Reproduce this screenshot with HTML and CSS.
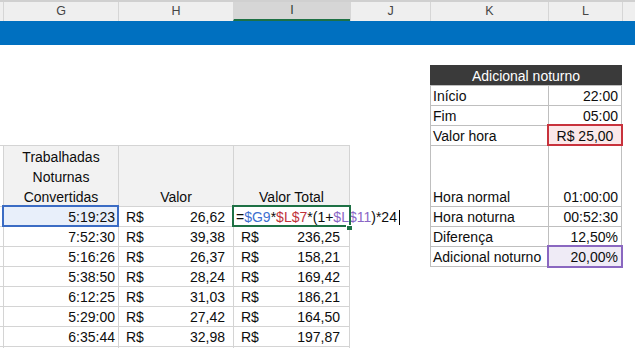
FILE: index.html
```html
<!DOCTYPE html>
<html lang="pt-BR">
<head>
    <meta charset="UTF-8">
    <meta name="viewport" content="width=device-width, initial-scale=1.0">
    <title>Adicional noturno</title>
    <link rel="stylesheet" href="styles.css">
</head>
<body>
<div class="colheads">
    <div class="ch f"></div>
    <div class="ch g">G</div>
    <div class="ch h">H</div>
    <div class="ch i active">I</div>
    <div class="ch j">J</div>
    <div class="ch k">K</div>
    <div class="ch l">L</div>
    <div class="ch m"></div>
</div>
<div class="banner"></div>

<div class="sheet">
    <!-- tabela de horas -->
    <div class="hours">
        <div class="row tall">
            <div class="cell f"></div>
            <div class="cell g head"><span>Trabalhadas</span><span>Noturnas</span><span>Convertidas</span></div>
            <div class="cell h head"><span>Valor</span></div>
            <div class="cell i head"><span>Valor Total</span></div>
        </div>
        <div class="row">
            <div class="cell f"></div>
            <div class="cell g num ref-blue">5:19:23</div>
            <div class="cell h money"><span>R$</span><span>26,62</span></div>
            <div class="cell i editing"><span>=<span class="c-blue">$G9</span>*<span class="c-red">$L$7</span>*(1+<span class="c-purple">$L$11</span>)*24</span><span class="caret"></span></div>
        </div>
        <div class="row">
            <div class="cell f"></div>
            <div class="cell g num">7:52:30</div>
            <div class="cell h money"><span>R$</span><span>39,38</span></div>
            <div class="cell i money"><span>R$</span><span>236,25</span></div>
        </div>
        <div class="row">
            <div class="cell f"></div>
            <div class="cell g num">5:16:26</div>
            <div class="cell h money"><span>R$</span><span>26,37</span></div>
            <div class="cell i money"><span>R$</span><span>158,21</span></div>
        </div>
        <div class="row">
            <div class="cell f"></div>
            <div class="cell g num">5:38:50</div>
            <div class="cell h money"><span>R$</span><span>28,24</span></div>
            <div class="cell i money"><span>R$</span><span>169,42</span></div>
        </div>
        <div class="row">
            <div class="cell f"></div>
            <div class="cell g num">6:12:25</div>
            <div class="cell h money"><span>R$</span><span>31,03</span></div>
            <div class="cell i money"><span>R$</span><span>186,21</span></div>
        </div>
        <div class="row">
            <div class="cell f"></div>
            <div class="cell g num">5:29:00</div>
            <div class="cell h money"><span>R$</span><span>27,42</span></div>
            <div class="cell i money"><span>R$</span><span>164,50</span></div>
        </div>
        <div class="row">
            <div class="cell f"></div>
            <div class="cell g num">6:35:44</div>
            <div class="cell h money"><span>R$</span><span>32,98</span></div>
            <div class="cell i money"><span>R$</span><span>197,87</span></div>
        </div>
        <div class="row stub">
            <div class="cell f"></div>
            <div class="cell g"></div>
            <div class="cell h"></div>
            <div class="cell i"></div>
        </div>
    </div>

    <div class="gap"></div>

    <!-- parametros -->
    <div class="params">
        <div class="title">Adicional noturno</div>
        <div class="row">
            <div class="cell k">Início</div>
            <div class="cell l num">22:00</div>
        </div>
        <div class="row">
            <div class="cell k">Fim</div>
            <div class="cell l num">05:00</div>
        </div>
        <div class="row">
            <div class="cell k">Valor hora</div>
            <div class="cell l center ref-red">R$ 25,00</div>
        </div>
        <div class="row tall">
            <div class="cell k">Hora normal</div>
            <div class="cell l num">01:00:00</div>
        </div>
        <div class="row">
            <div class="cell k">Hora noturna</div>
            <div class="cell l num">00:52:30</div>
        </div>
        <div class="row">
            <div class="cell k">Diferença</div>
            <div class="cell l num">12,50%</div>
        </div>
        <div class="row last">
            <div class="cell k">Adicional noturno</div>
            <div class="cell l num ref-purple">20,00%</div>
        </div>
    </div>
</div>
</body>
</html>
```

FILE: styles.css
```css
body {
    margin: 0;
    font-family: "Liberation Sans", Arial, sans-serif;
    font-size: 14px;
    color: #0d0d0d;
    background-color: #fff;
    height: 348px;
    overflow: hidden;
}

/* column widths shared by headers and cells */
.f { width: 3px; }
.g { width: 115px; }
.h { width: 115px; }
.i { width: 117px; }
.j { width: 80px; }
.k { width: 118px; }
.l { width: 74px; }
.m { width: 13px; }

.colheads {
    display: flex;
    height: 21px;
    box-sizing: border-box;
    border-top: 2px solid #d0d0d0;
    background-color: #efefef;
}

.ch {
    flex: none;
    box-sizing: border-box;
    border-left: 1px solid #d6d6d6;
    text-align: center;
    font-size: 12.5px;
    line-height: 19px;
    color: #454545;
}

.ch.f {
    border-left: none;
}

.ch.active {
    background-color: #d6d6d6;
    border-bottom: 2px solid #1e7145;
    line-height: 17px;
    color: #2f3a33;
}

.banner {
    height: 24px;
    background-color: #0070c0;
}

.sheet {
    display: flex;
    align-items: flex-start;
}

.gap {
    width: 80px;
    flex: none;
}

.row {
    display: flex;
    height: 20px;
}

.row.tall {
    height: 61px;
}

.row.stub {
    height: 2px;
}

.cell {
    flex: none;
    box-sizing: border-box;
    display: flex;
    align-items: flex-end;
    line-height: 16px;
    padding-bottom: 1px;
    white-space: nowrap;
}

/* hours table */
.hours {
    margin-top: 100px;
    flex: none;
}

.hours .cell {
    border-top: 1px solid #d4d4d4;
    border-left: 1px solid #d4d4d4;
}

.hours .cell.f {
    border-left: none;
}

.hours .cell.i {
    border-right: 1px solid #d4d4d4;
}

.head {
    background-color: #f2f2f2;
    flex-direction: column;
    justify-content: flex-end;
    align-items: center;
    gap: 4px;
}

.num {
    justify-content: flex-end;
    padding-right: 3px;
}

.center {
    justify-content: center;
}

.money {
    justify-content: space-between;
    padding-left: 7px;
    padding-right: 8px;
}

.money.i {
    padding-right: 9px;
}

.editing {
    position: relative;
    padding-left: 2px;
    overflow: visible;
    outline: 2px solid #1e7145;
    outline-offset: -1px;
    background-color: #fff;
}

.editing::after {
    content: "";
    position: absolute;
    right: -3px;
    bottom: -4px;
    width: 5px;
    height: 4px;
    background-color: #1e7145;
    border-left: 1px solid #fff;
    border-top: 1px solid #fff;
}

.caret {
    flex: none;
    width: 1px;
    height: 15px;
    margin-left: 2px;
    background-color: #000;
}

.c-blue { color: #3d6fd0; }
.c-red { color: #c0313a; }
.c-purple { color: #8a67c6; }

.ref-blue {
    position: relative;
    background-color: #e8effa;
    outline: 2px solid #3b6cc4;
    outline-offset: -1px;
}

.ref-red {
    position: relative;
    background-color: #fbe8e9;
    outline: 2px solid #c8323c;
    outline-offset: -1px;
}

.ref-purple {
    position: relative;
    background-color: #efebf6;
    outline: 2px solid #8a67c0;
    outline-offset: -1px;
}

/* parameters table */
.params {
    margin-top: 20px;
    flex: none;
}

.title {
    width: 192px;
    height: 20px;
    box-sizing: border-box;
    background-color: #3a3a3a;
    color: #fff;
    text-align: center;
    line-height: 20px;
    padding-top: 1px;
}

.params .cell {
    border-top: 1px solid #bfbfbf;
    border-left: 1px solid #bfbfbf;
}

.params .cell.k {
    padding-left: 2px;
}

.params .cell.l {
    border-right: 1px solid #bfbfbf;
}

.params .row.last .cell {
    border-bottom: 1px solid #bfbfbf;
    height: 21px;
}
```
